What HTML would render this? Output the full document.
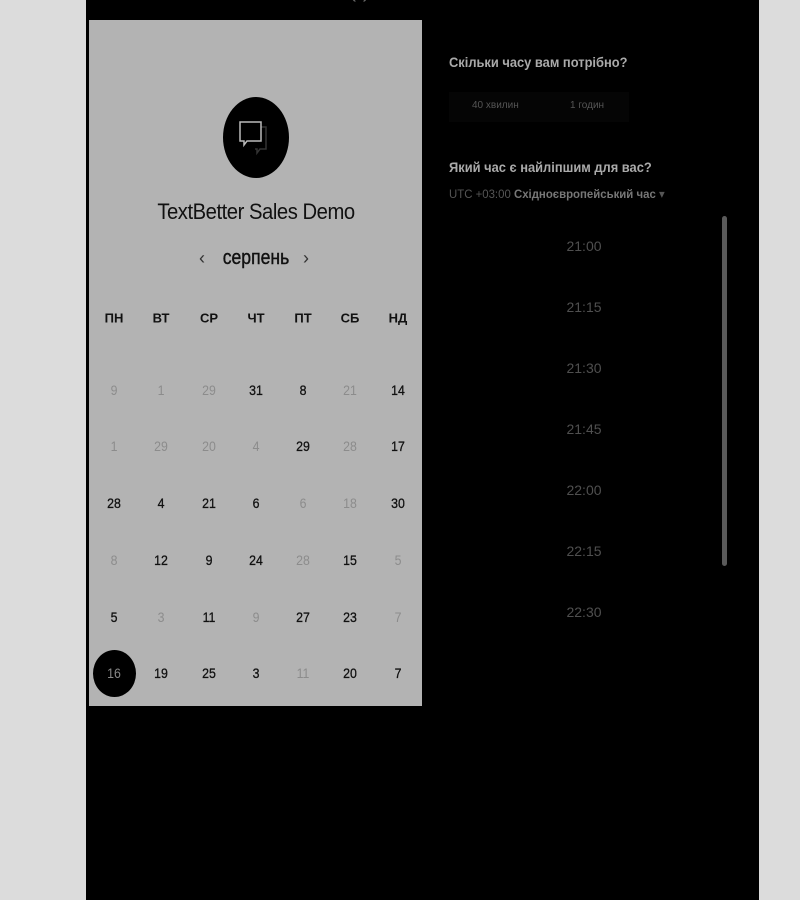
<!DOCTYPE html>
<html><head><meta charset="utf-8"><style>
*{margin:0;padding:0;box-sizing:border-box}
body{width:800px;height:900px;background:#dcdcdc;position:relative;overflow:hidden;font-family:"Liberation Sans",sans-serif}
.panel{position:absolute;left:86px;top:0;width:673px;height:900px;background:#000}
.card{position:absolute;left:89px;top:20px;width:333px;height:686px;background:#b3b3b3}
.a{position:absolute;white-space:nowrap}
.c{transform:translateX(-50%);text-align:center}
.h{font-weight:bold;font-size:13px;color:#111}
.d{font-size:14px;color:#111;transform:translate(-50%,-50%) scaleX(0.88);-webkit-text-stroke:0.3px #111}
.g{color:#8c8c8c;-webkit-text-stroke:0}
.t{font-size:14px;color:#4f4f4f;transform:translate(-50%,-50%)}
</style></head><body>
<div class="panel"></div>
<div class="a" style="left:350px;top:-14px;font-size:20px;color:#666">‹ › ····</div>
<div class="card"></div>
<div class="a" style="left:223px;top:97px;width:66px;height:81px;border-radius:50%;background:#000"></div>
<svg class="a" style="left:236px;top:118px" width="40" height="40" viewBox="0 0 40 40">
<path d="M13 9h17v22h-6l-3 4v-4h-2" fill="none" stroke="#333" stroke-width="1.5"/>
<path d="M4 4h21v19H11l-3 4v-4H4z" fill="#000" stroke="#bbb" stroke-width="1.5"/>
</svg>
<div class="a c" style="left:256px;top:199px;font-size:22px;color:#111;letter-spacing:-0.5px;transform:translateX(-50%) scaleX(0.92)">TextBetter Sales Demo</div>
<div class="a" style="left:199px;top:248px;font-size:18px;color:#333">‹</div>
<div class="a c" style="left:256px;top:247px;font-size:20px;color:#111;-webkit-text-stroke:0.4px #111;transform:translateX(-50%) scaleX(0.88)">серпень</div>
<div class="a" style="left:303px;top:248px;font-size:18px;color:#333">›</div>
<div id="cal"></div>
<div class="a" style="left:93px;top:650px;width:43px;height:47px;border-radius:50%;background:#000"></div>
<div class="a" style="left:449px;top:54px;font-size:14px;color:#aaa;font-weight:bold;transform:scaleX(0.92);transform-origin:left">Скільки часу вам потрібно?</div>
<div class="a" style="left:449px;top:92px;width:180px;height:30px;background:#050505"></div>
<div class="a" style="left:472px;top:100px;font-size:10px;color:#555">40 хвилин</div>
<div class="a" style="left:570px;top:100px;font-size:10px;color:#555">1 годин</div>
<div class="a" style="left:449px;top:159px;font-size:14px;color:#aaa;font-weight:bold;transform:scaleX(0.92);transform-origin:left">Який час є найліпшим для вас?</div>
<div class="a" style="left:449px;top:187px;font-size:12px;color:#555;transform:scaleX(0.95);transform-origin:left">UTC +03:00 <span style="color:#777;font-weight:bold">Східноєвропейський час</span> ▾</div>
<div class="a" style="left:722px;top:216px;width:5px;height:350px;border-radius:3px;background:#5a5a5a"></div>
<div id="times"></div>
<script>
var cols=[114,161,209,256,303,350,398],rows=[390,446,503,560,617,673];
var hd=["ПН","ВТ","СР","ЧТ","ПТ","СБ","НД"];
var data=[["9g","1g","29g","31","8","21g","14"],["1g","29g","20g","4g","29","28g","17"],["28","4","21","6","6g","18g","30"],["8g","12","9","24","28g","15","5g"],["5","3g","11","9g","27","23","7g"],["16w","19","25","3","11g","20","7"]];
var h="";
hd.forEach(function(x,i){h+='<div class="a h" style="left:'+cols[i]+'px;top:318px;transform:translate(-50%,-50%)">'+x+'</div>'});
data.forEach(function(r,j){r.forEach(function(v,i){var cl="",t=v;if(v.slice(-1)=="g"){cl=" g";t=v.slice(0,-1)}var st="";if(v.slice(-1)=="w"){t=v.slice(0,-1);st="color:#888;-webkit-text-stroke:0;z-index:2;"}
h+='<div class="a d'+cl+'" style="'+st+'left:'+cols[i]+'px;top:'+rows[j]+'px">'+t+'</div>'})});
document.getElementById("cal").outerHTML=h;
var ts=["21:00","21:15","21:30","21:45","22:00","22:15","22:30"],s="";
ts.forEach(function(x,i){s+='<div class="a t" style="left:584px;top:'+(246+i*61)+'px">'+x+'</div>'});
document.getElementById("times").outerHTML=s;
</script>
</body></html>
